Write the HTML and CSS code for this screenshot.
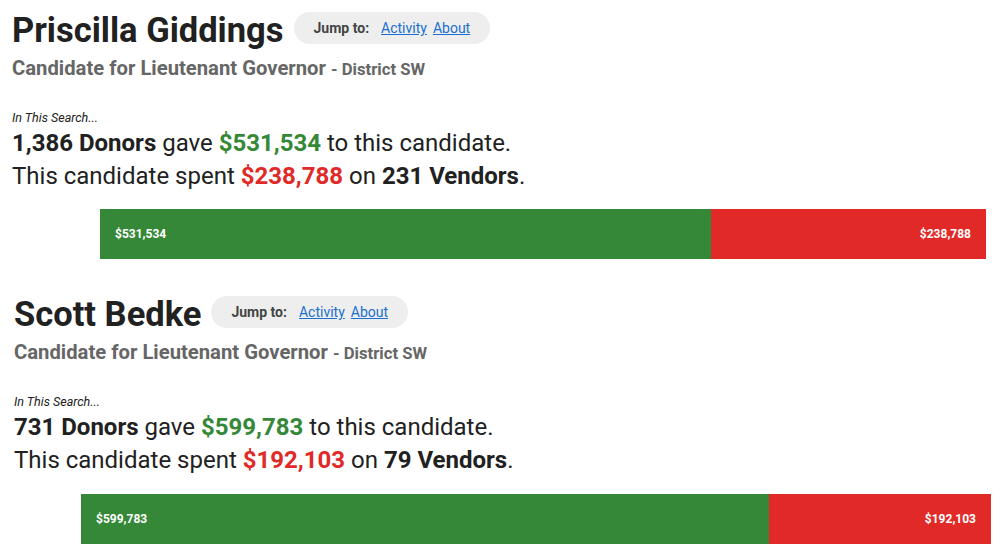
FILE: index.html
```html
<!DOCTYPE html>
<html>
<head>
<meta charset="utf-8">
<link rel="stylesheet" href="styles.css">
</head>
<body>
<section class="candidate first">
  <div class="head-row">
    <h1 class="name">Priscilla Giddings</h1>
    <div class="jump"><span class="jump-label">Jump to:</span><a href="#">Activity</a><a href="#">About</a></div>
  </div>
  <div class="office">Candidate for Lieutenant Governor <span class="district">- District SW</span></div>
  <div class="search-label">In This Search...</div>
  <p class="stat"><b>1,386 Donors</b> gave <b class="green">$531,534</b> to this candidate.</p>
  <p class="stat">This candidate spent <b class="red">$238,788</b> on <b>231 Vendors</b>.</p>
  <div class="bar bar-first">
    <div class="seg seg-in" style="width:611px">$531,534</div>
    <div class="seg seg-out" style="width:275px">$238,788</div>
  </div>
</section>
<section class="candidate second">
  <div class="head-row">
    <h1 class="name">Scott Bedke</h1>
    <div class="jump"><span class="jump-label">Jump to:</span><a href="#">Activity</a><a href="#">About</a></div>
  </div>
  <div class="office">Candidate for Lieutenant Governor <span class="district">- District SW</span></div>
  <div class="search-label">In This Search...</div>
  <p class="stat"><b>731 Donors</b> gave <b class="green">$599,783</b> to this candidate.</p>
  <p class="stat">This candidate spent <b class="red">$192,103</b> on <b>79 Vendors</b>.</p>
  <div class="bar bar-second">
    <div class="seg seg-in" style="width:688px">$599,783</div>
    <div class="seg seg-out" style="width:222px">$192,103</div>
  </div>
</section>
</body>
</html>
```
FILE: styles.css
```css
html, body {
  margin: 0;
  padding: 0;
  background: #fff;
}
body {
  font-family: Roboto, "Liberation Sans", sans-serif;
  color: #212121;
  width: 999px;
  overflow: hidden;
}
.candidate {
  padding-top: 9px;
}
.first {
  padding-left: 12px;
}
.second {
  padding-left: 14px;
  padding-top: 34px;
}
.head-row {
  display: flex;
  align-items: center;
  gap: 10px;
  height: 42px;
}
.name {
  margin: 0;
  font-size: 34.5px;
  font-weight: 700;
  line-height: 42px;
  color: #212121;
}
.jump {
  display: flex;
  align-items: center;
  height: 32px;
  padding: 0 20px;
  background: #eeeeee;
  border-radius: 16px;
  font-size: 14px;
  margin-top: -4px;
}
.jump-label {
  font-weight: 700;
  color: #444;
  margin-right: 12px;
}
.jump a {
  color: #1a6fd1;
  text-decoration: underline;
  margin-right: 6px;
}
.jump a:last-child {
  margin-right: 0;
}
.office {
  font-size: 20.25px;
  font-weight: 700;
  color: #666666;
  line-height: 24px;
  margin-top: 5px;
}
.district {
  font-size: 16.7px;
}
.search-label {
  font-size: 12.5px;
  font-style: italic;
  color: #212121;
  margin-top: 29px;
  line-height: 14px;
}
.stat {
  margin: 0;
  font-size: 24px;
  line-height: 33px;
}
.search-label + .stat {
  margin-top: 2px;
}
.stat b {
  font-weight: 700;
}
.green {
  color: #358837;
}
.red {
  color: #e12a27;
}
.bar {
  display: flex;
  height: 50px;
  margin-top: 16px;
}
.bar-first {
  margin-left: 88px;
}
.bar-second {
  margin-left: 67px;
  margin-top: 17px;
}
.seg {
  display: flex;
  align-items: center;
  color: #fff;
  font-size: 12px;
  font-weight: 700;
  padding: 0 15px;
  box-sizing: border-box;
}
.seg-in {
  background: #358837;
}
.seg-out {
  background: #e12a27;
  justify-content: flex-end;
}
```
